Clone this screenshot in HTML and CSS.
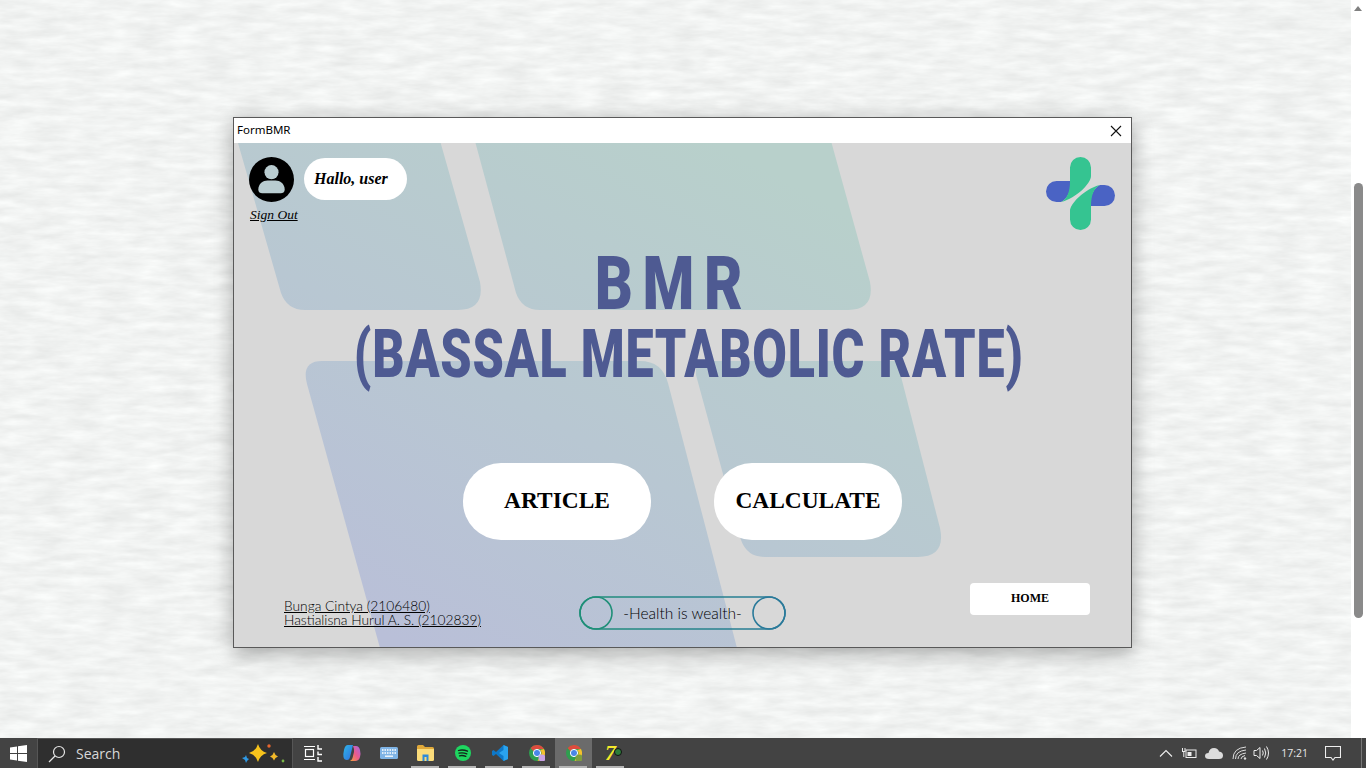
FILE: index.html
```html
<!DOCTYPE html>
<html lang="en">
<head>
  <meta charset="UTF-8">
  <title>FormBMR</title>
  <link rel="stylesheet" href="styles.css">
</head>
<body>

  <div class="desktop">
    <div class="page">
      <svg class="paper" width="1351" height="738" aria-hidden="true">
        <filter id="paperNoise" x="0" y="0" width="100%" height="100%" color-interpolation-filters="sRGB">
          <feTurbulence type="fractalNoise" baseFrequency="0.03 0.13" numOctaves="4" seed="7"/>
          <feColorMatrix type="matrix" values="0 .1 0 0 .895  0 .1 0 0 .902  0 .1 0 0 .898  0 0 0 0 1"/>
        </filter>
        <rect width="1351" height="738" filter="url(#paperNoise)"/>
      </svg>

      <div class="window">
        <div class="titlebar">
          <span>FormBMR</span>
          <svg class="close-icon" width="12" height="12" viewBox="0 0 12 12">
            <path d="M1 1l10 10M11 1L1 11" stroke="#111" stroke-width="1.1" fill="none"/>
          </svg>
        </div>

        <div class="client">
          <!-- background shapes, viewBox starts at the client's corner on the page -->
          <svg class="shapes" width="897" height="504" viewBox="234 143 897 504" aria-hidden="true">
            <defs>
              <linearGradient id="shapeFill" gradientUnits="userSpaceOnUse" x1="430" y1="660" x2="720" y2="143">
                <stop offset="0" stop-color="#b9bfd8"/>
                <stop offset="0.45" stop-color="#b8c7d2"/>
                <stop offset="1" stop-color="#b8d0cb"/>
              </linearGradient>
            </defs>
            <path fill="url(#shapeFill)" d="M234 130H437L480 282Q485 310 458 310H305Q287 310 281 293L238 143Z"/>
            <path fill="url(#shapeFill)" d="M472 130H828L870 282Q875 310 848 310H540Q522 310 516 293Z"/>
            <path fill="url(#shapeFill)" d="M322 361H640Q662 361 668 383L737 648H380L307 384Q301 361 322 361Z"/>
            <path fill="url(#shapeFill)" d="M696 361H897L940 528Q946 557 918 557H765Q747 557 741 540L696 375Z"/>
          </svg>

          <div class="top-row">
            <div class="user-block">
              <div class="user-row">
                <svg class="avatar" width="45" height="45" viewBox="0 0 46 46">
                  <circle cx="23" cy="23" r="23" fill="#000"/>
                  <circle cx="23" cy="15.5" r="7.2" fill="#b9ccd0"/>
                  <path d="M9.5 33.5c0-6.5 5-9.5 9.5-9.5h8c4.5 0 9.500 3 9.500 9.500 0 2.500-2 3.500-4 3.500h-19c-2 0-4-1-4-3.500z" fill="#b9ccd0"/>
                </svg>
                <div class="hello">Hallo, user</div>
              </div>
              <a class="sign-out">Sign Out</a>
            </div>
            <svg class="logo" width="71" height="74" viewBox="1046 157 71 74">
              <path fill="#4a63c4" d="M1061 202H1056.5a10.5 10.5 0 0 1 0-21H1071C1071 192 1067 199 1061 202Z"/>
              <path fill="#4a63c4" d="M1100 185H1104.5a10.5 10.5 0 0 1 0 21H1090C1090 195 1094 188 1100 185Z"/>
              <path fill="#35c491" d="M1070 167.5a10.5 10.5 0 0 1 21 0V176C1091 183 1077 198 1061 202C1067 199 1070 192 1070 181Z"/>
              <path fill="#35c491" d="M1091 219.5a10.5 10.5 0 0 1-21 0V211C1070 204 1084 189 1100 185C1094 188 1091 195 1091 206Z"/>
            </svg>
          </div>

          <h1 class="title-main"><span>BMR</span></h1>
          <h2 class="title-sub"><span>(BASSAL METABOLIC RATE)</span></h2>

          <div class="main-actions">
            <button class="big-btn">ARTICLE</button>
            <button class="big-btn">CALCULATE</button>
          </div>

          <div class="footer-row">
            <div class="credits">
              <a>Bunga Cintya (2106480)</a>
              <a>Hastialisna Hurul A. S. (2102839)</a>
            </div>
            <div class="motto">
              <svg class="motto-ring" width="207" height="34" viewBox="0 0 207 34" aria-hidden="true">
                <defs>
                  <linearGradient id="ringStroke" x1="0" y1="0" x2="1" y2="0">
                    <stop offset="0" stop-color="#1f8f78"/>
                    <stop offset="1" stop-color="#2a7a9a"/>
                  </linearGradient>
                </defs>
                <rect x="1" y="1" width="205" height="32" rx="16" fill="none" stroke="url(#ringStroke)" stroke-width="1.6"/>
                <circle cx="17" cy="17" r="16" fill="none" stroke="#1f8f78" stroke-width="1.6"/>
                <circle cx="190" cy="17" r="16" fill="none" stroke="#2a7a9a" stroke-width="1.6"/>
              </svg>
              <span>-Health is wealth-</span>
            </div>
            <button class="home-btn">HOME</button>
          </div>
        </div>
      </div>
    </div>

    <div class="scrollbar">
      <span class="scroll-up"></span>
      <span class="scroll-thumb"></span>
    </div>
  </div>

  <div class="taskbar">
    <div class="start">
      <svg width="17" height="17" viewBox="0 0 17 17"><path fill="#fff" d="M0 2.4l7-1v6.7H0zM8 1.3L17 0v8.100H8zM0 9h7v6.600l-7-1zM8 9h9v8l-9-1.300z"/></svg>
    </div>
    <div class="search">
      <svg width="18" height="18" viewBox="0 0 18 18" fill="none" stroke="#e6e6e6" stroke-width="1.2"><circle cx="11" cy="7" r="5.500"/><path d="M7 11l-6 6"/></svg>
      <span class="search-text">Search</span>
      <svg class="sparkles" width="46" height="24" viewBox="0 0 46 24">
        <path fill="#f7c31c" d="M19 2q2 7 9 9-7 2-9 9-2-7-9-9 7-2 9-9z"/>
        <path fill="#f2b92a" d="M35 10q1 3.500 4 4.500-3 1-4 4-1-3-4-4 3-1 4-4.500z"/>
        <path fill="#2f9ae6" d="M3 16l3-1 1-2 1 3 2 1-2 2-1 2-1-3z"/>
        <circle cx="30" cy="4" r="1.700" fill="#e8662e"/>
        <circle cx="44" cy="19" r="1.400" fill="#7ab648"/>
      </svg>
    </div>

    <div class="task-app">
      <svg class="task-view" width="18" height="18" viewBox="0 0 18 18" fill="none" stroke="#fff" stroke-width="1.200"><path d="M0 2.500h11M0 15.500h11"/><rect x="1.500" y="5.500" width="8" height="7"/><path d="M14 1v4h4M14 7.500v3h4M14 13v4h4" stroke-width="1.400"/></svg>
    </div>
    <div class="task-app">
      <svg width="18" height="18" viewBox="0 0 18 18">
        <defs>
          <linearGradient id="copilotA" x1="0" y1="0" x2="1" y2="1"><stop offset="0" stop-color="#2fb5e8"/><stop offset="1" stop-color="#2f6fe0"/></linearGradient>
          <linearGradient id="copilotB" x1="0" y1="1" x2="1" y2="0"><stop offset="0" stop-color="#f2a23a"/><stop offset="0.5" stop-color="#ec5a8c"/><stop offset="1" stop-color="#a268e8"/></linearGradient>
        </defs>
        <path fill="url(#copilotA)" d="M5 1h5L7 13q-.6 3-3 3-3 0-3.500-3-.5-3 .5-7 1-5 4-5z"/>
        <path fill="url(#copilotB)" d="M10 2h3q3 0 4 4 1 4 0 7-1 4-5 4H7q2-1 2.500-3L11 8q.5-3-1-6z"/>
      </svg>
    </div>
    <div class="task-app">
      <svg width="18" height="12" viewBox="0 0 18 12">
        <rect width="18" height="12" rx="1.500" fill="#7fb4e6"/>
        <path stroke="#fff" stroke-width="1.300" stroke-dasharray="1.500 1" d="M2 3h14M2 6h14"/>
        <path stroke="#fff" stroke-width="1.300" d="M5 9.200h8"/>
      </svg>
    </div>
    <div class="task-app is-open">
      <svg width="17" height="16" viewBox="0 0 17 16">
        <path fill="#e0a93a" d="M0 1.500Q0 0 1.500 0H6l2 2h7.500Q17 2 17 3.500V6H0z"/>
        <path fill="#fbdc7a" d="M0 4h17v10.500q0 1.500-1.500 1.500h-14Q0 16 0 14.500z"/>
        <path fill="#2e8ad8" d="M5.500 9.500h6V16h-2v-4h-2v4h-2z"/>
      </svg>
    </div>
    <div class="task-app is-open">
      <svg width="16" height="16" viewBox="0 0 16 16">
        <circle cx="8" cy="8" r="8" fill="#1ed760"/>
        <path d="M3.500 5.500q4.500-1.300 9 .7M4 8.200q4-1 7.800.7M4.500 10.800q3.200-.8 6.300.6" fill="none" stroke="#12261a" stroke-width="1.300" stroke-linecap="round"/>
      </svg>
    </div>
    <div class="task-app is-open">
      <svg width="16" height="16" viewBox="0 0 16 16">
        <path fill="#0e78c8" d="M11.500 0L16 2v12l-4.500 2L4 9l-2.500 2L0 10V6l1.500-1L4 7z"/>
        <path fill="#2aa3ee" d="M11.500 0L16 2v12l-4.500 2V11L7 8l4.500-3z"/>
      </svg>
    </div>
    <div class="task-app is-open">
      <svg width="16" height="16" viewBox="0 0 16 16">
        <circle cx="8" cy="8" r="8" fill="#2f9e4f"/>
        <path fill="#dd4b3e" d="M8 0a8 8 0 0 1 7 4H8a4 4 0 0 0-3.600 2.300L1.600 3A8 8 0 0 1 8 0z"/>
        <path fill="#f6c02d" d="M15 4a8 8 0 0 1-6.500 12L11.500 10.500A4 4 0 0 0 11 5z"/>
        <circle cx="8" cy="8" r="3.600" fill="#4a86e8" stroke="#fff" stroke-width="1"/>
        <circle cx="13" cy="13" r="3.500" fill="#c9a2e6"/>
      </svg>
    </div>
    <div class="task-app is-open is-active">
      <svg width="16" height="16" viewBox="0 0 16 16">
        <circle cx="8" cy="8" r="8" fill="#2f9e4f"/>
        <path fill="#dd4b3e" d="M8 0a8 8 0 0 1 7 4H8a4 4 0 0 0-3.600 2.300L1.600 3A8 8 0 0 1 8 0z"/>
        <path fill="#f6c02d" d="M15 4a8 8 0 0 1-6.500 12L11.500 10.500A4 4 0 0 0 11 5z"/>
        <circle cx="8" cy="8" r="3.600" fill="#4a86e8" stroke="#fff" stroke-width="1"/>
        <circle cx="13" cy="13" r="3.500" fill="#7f9e3e"/>
      </svg>
    </div>
    <div class="task-app is-open">
      <span class="seven-icon">7<i></i></span>
    </div>

    <div class="tray">
      <svg width="14" height="8" viewBox="0 0 14 8" fill="none" stroke="#eee" stroke-width="1.100"><path d="M1 7.500l6-6 6 6"/></svg>
      <svg class="tray-battery" width="16" height="12" viewBox="0 0 16 12" fill="none" stroke="#eee"><rect x="5" y="3" width="10" height="7.500"/><rect x="6.500" y="5" width="4" height="4" fill="#eee" stroke="none"/><path d="M1 4.500h3.500M1.500 1v3M4 1v3M2.800 5v5"/></svg>
      <svg class="tray-cloud" width="18" height="11" viewBox="0 0 18 11"><path fill="#dcdcdc" d="M4 11Q0 11 0 8t3.500-3Q4.500 0 9 0q4 0 5 3.500 4 .5 4 4T14 11z"/></svg>
      <svg class="tray-wifi" width="15" height="14" viewBox="0 0 15 14" fill="none" stroke="#ddd"><path d="M1 13Q1 2 14 1M3.500 13Q3.500 5 14 4M6 13q0-5 8-6M9 13q0-2.500 4-3.500"/><circle cx="13" cy="12.500" r="1.200" fill="#ddd" stroke="none"/></svg>
      <svg class="tray-volume" width="17" height="14" viewBox="0 0 17 14" fill="none" stroke="#eee"><path d="M1 4.500h2.500L7 1.500v11l-3.500-3H1zM9.500 4.500q1.500 2.500 0 5M11.500 2.500q2.500 4.500 0 9M13.500 .5q4 6.500 0 13"/></svg>
      <span class="clock">17:21</span>
      <svg class="tray-notify" width="16" height="15" viewBox="0 0 16 15" fill="none" stroke="#eee" stroke-width="1.100"><path d="M.5.500h15v11H10l-2 2.500-2-2.500H.5z"/></svg>
      <span class="show-desktop"></span>
    </div>
  </div>

</body>
</html>
```

FILE: styles.css
```css
* {
  box-sizing: border-box;
}
html, body {
  margin: 0;
  height: 100%;
  overflow: hidden;
}
body {
  font-family: 'Liberation Serif', serif;
  color: #000;
  background: #f1f3f2;
}

/* desktop area */
.desktop {
  display: flex;
  height: 738px;
}
.page {
  position: relative;
  flex: 1;
  padding: 117px 0 0 233px;
  overflow: hidden;
}
.paper {
  position: absolute;
  top: 0;
  left: 0;
}
.scrollbar {
  position: relative;
  width: 15px;
  background: #fff;
}
.scroll-up {
  position: absolute;
  top: 6px;
  left: 3px;
  border-left: 4.5px solid transparent;
  border-right: 4.5px solid transparent;
  border-bottom: 5px solid #808080;
}
.scroll-thumb {
  position: absolute;
  top: 183px;
  left: 3px;
  width: 9px;
  height: 435px;
  background: #8a8a8a;
  border-radius: 5px;
}

/* the form */
.window {
  position: relative;
  width: 899px;
  height: 531px;
  border: 1px solid #595959;
  background: #d8d8d8;
  box-shadow: 0 5px 20px rgba(0,0,0,0.32);
}
.titlebar {
  display: flex;
  justify-content: space-between;
  align-items: center;
  height: 25px;
  padding: 0 9px 2px 3px;
  background: #fff;
  font-family: 'Noto Sans', sans-serif;
  font-size: 11.5px;
}
.close-icon {
  margin-top: 2px;
}
.client {
  position: relative;
  height: 504px;
  overflow: hidden;
}
.shapes {
  position: absolute;
  top: 0;
  left: 0;
}
.top-row, .title-main, .title-sub, .main-actions, .footer-row {
  position: relative;
}
.top-row {
  display: flex;
  justify-content: space-between;
  height: 87px;
  padding: 14px 14px 0 15px;
}
.user-row {
  display: flex;
  align-items: flex-start;
  gap: 10px;
}
.hello {
  display: flex;
  align-items: center;
  width: 103px;
  height: 42px;
  margin-top: 1px;
  padding-left: 10px;
  background: #fff;
  border-radius: 21px;
  font-size: 16px;
  font-weight: bold;
  font-style: italic;
}
.sign-out {
  display: block;
  margin: 5px 0 0 1px;
  font-size: 13.5px;
  font-style: italic;
  text-decoration: underline;
}

/* heading, no condensed font here so the letters are squeezed */
.title-main, .title-sub {
  margin: 0;
  font-family: 'Roboto', 'Liberation Sans', sans-serif;
  font-weight: 900;
  color: #4e5a92;
  text-align: center;
  white-space: nowrap;
}
.title-main span, .title-sub span {
  display: inline-block;
}
.title-main {
  height: 84px;
  margin-top: 11px;
  padding-right: 18px;
  font-size: 74px;
  line-height: 86px;
  letter-spacing: 12px;
}
.title-main span {
  transform: scaleX(0.8);
}
.title-sub {
  height: 60px;
  padding-left: 12px;
  font-size: 66px;
  line-height: 60px;
  letter-spacing: 1px;
}
.title-sub span {
  transform: scaleX(0.76);
}

/* buttons */
.main-actions {
  display: flex;
  justify-content: center;
  gap: 63px;
  margin-top: 78px;
}
.big-btn {
  width: 188px;
  height: 77px;
  padding-bottom: 3px;
  border: none;
  border-radius: 38px;
  background: #fff;
  font-family: 'Liberation Serif', serif;
  font-size: 23.4px;
  font-weight: bold;
}
.footer-row {
  display: flex;
  align-items: flex-start;
  margin-top: 43px;
  padding-left: 50px;
}
.credits {
  display: flex;
  flex-direction: column;
  width: 295px;
  padding-top: 16px;
  font-family: 'Lato', sans-serif;
  font-size: 13.75px;
  font-weight: 300;
  line-height: 14px;
}
.credits a {
  text-decoration: underline;
}
.motto {
  position: relative;
  display: flex;
  justify-content: center;
  align-items: center;
  width: 207px;
  height: 34px;
  margin-top: 13px;
  font-family: 'Lato', sans-serif;
  font-size: 15.5px;
  font-weight: 300;
}
.motto-ring {
  position: absolute;
  top: 0;
  left: 0;
}
.home-btn {
  width: 120px;
  height: 32px;
  margin-left: 184px;
  padding-bottom: 2px;
  border: none;
  border-radius: 4px;
  background: #fff;
  font-family: 'Liberation Serif', serif;
  font-size: 12px;
  font-weight: bold;
}

/* windows taskbar */
.taskbar {
  display: flex;
  align-items: stretch;
  height: 30px;
  background: #434343;
  font-family: 'Open Sans', sans-serif;
  color: #e8e8e8;
}
.start {
  display: flex;
  justify-content: center;
  align-items: center;
  width: 37px;
}
.search {
  display: flex;
  align-items: center;
  width: 256px;
  margin-right: 3px;
  padding: 0 7px 0 10px;
  background: #2f2f2f;
  border: 1px solid #565656;
  border-width: 1px 1px 0 1px;
}
.search-text {
  margin-left: 10px;
  font-size: 14px;
  color: #d8d8d8;
}
.sparkles {
  margin-left: auto;
}
.task-app {
  position: relative;
  display: flex;
  justify-content: center;
  align-items: center;
  width: 37px;
}
.task-view {
  margin-right: 3px;
}
.task-app.is-active {
  background: #6b6b6b;
}
.task-app.is-open::after {
  content: "";
  position: absolute;
  bottom: 0;
  left: 4px;
  width: 28px;
  height: 2px;
  background: #b5b5b5;
}
.seven-icon {
  position: relative;
  font-family: 'Liberation Serif', serif;
  font-size: 22px;
  font-style: italic;
  font-weight: bold;
  line-height: 16px;
  color: #f5ea2a;
}
.seven-icon i {
  position: absolute;
  top: 3px;
  left: 9px;
  width: 8px;
  height: 8px;
  border-radius: 50%;
  background: #2d7d3a;
  border: 1px solid #111;
}
.tray {
  display: flex;
  justify-content: flex-end;
  align-items: center;
  flex: 1;
  padding-right: 4px;
}
.tray-battery {
  margin-left: 8px;
}
.tray-cloud {
  margin-left: 8px;
}
.tray-wifi {
  margin-left: 9px;
}
.tray-volume {
  margin-left: 6px;
}
.clock {
  margin-left: 11px;
  font-size: 10.5px;
}
.tray-notify {
  margin-left: 17px;
}
.show-desktop {
  width: 1px;
  height: 30px;
  margin-left: 20px;
  background: #777;
}
```
